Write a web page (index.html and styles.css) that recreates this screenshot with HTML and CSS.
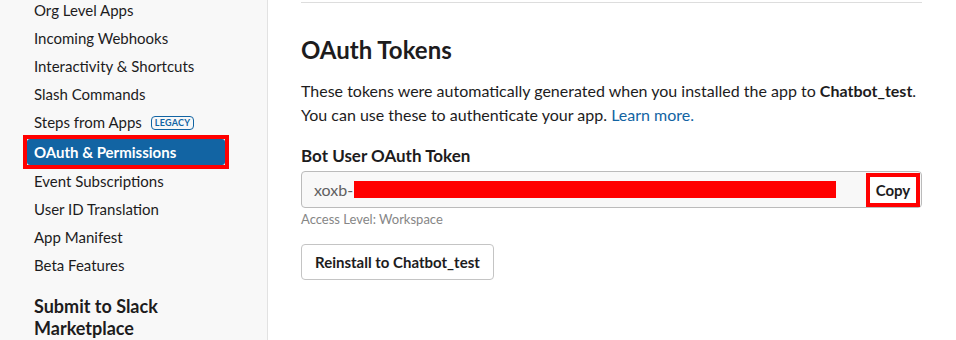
FILE: index.html
```html
<!DOCTYPE html>
<html lang="en">
<head>
    <meta charset="UTF-8">
    <title>OAuth &amp; Permissions | Slack API</title>
    <link rel="stylesheet" href="styles.css">
</head>
<body>
    <div class="page">
        <nav class="sidebar">
            <ul class="nav-list">
                <li class="nav-item">Org Level Apps</li>
                <li class="nav-item">Incoming Webhooks</li>
                <li class="nav-item">Interactivity &amp; Shortcuts</li>
                <li class="nav-item">Slash Commands</li>
                <li class="nav-item">Steps from Apps <span class="badge">Legacy</span></li>
                <li class="nav-item active">OAuth &amp; Permissions</li>
                <li class="nav-item">Event Subscriptions</li>
                <li class="nav-item">User ID Translation</li>
                <li class="nav-item">App Manifest</li>
                <li class="nav-item">Beta Features</li>
            </ul>
            <h3 class="nav-heading">Submit to Slack Marketplace</h3>
        </nav>

        <main class="content">
            <div class="divider"></div>
            <h2 class="section-title">OAuth Tokens</h2>
            <p class="section-text">
                These tokens were automatically generated when you installed the app to <strong>Chatbot_test</strong>.
                You can use these to authenticate your app. <a href="#" class="link">Learn more.</a>
            </p>

            <label class="field-label">Bot User OAuth Token</label>
            <div class="token-field">
                <span class="token-value">xoxb-<span class="redacted"></span></span>
                <button class="copy-btn highlight">Copy</button>
            </div>
            <div class="field-hint">Access Level: Workspace</div>

            <button class="btn">Reinstall to Chatbot_test</button>
        </main>
    </div>
</body>
</html>
```

FILE: styles.css
```css
body, html {
    margin: 0;
    padding: 0;
    height: 100%;
    overflow: hidden;
    font-family: 'Lato', 'Noto Sans', sans-serif;
    color: #1d1c1d;
    background-color: #fff;
}

.page {
    display: flex;
    height: 100%;
}

/* Sidebar */
.sidebar {
    width: 268px;
    flex-shrink: 0;
    box-sizing: border-box;
    background-color: #f8f8f8;
    border-right: 1px solid #e2e2e2;
    padding-left: 27px;
}

.nav-list {
    list-style: none;
    margin: -4px 0 0;
    padding: 0;
    width: 198px;
}

.nav-item {
    font-size: 15px;
    line-height: 28px;
    padding-left: 7px;
    white-space: nowrap;
}

.nav-item.active {
    position: relative;
    margin: 3px 0 2px;
    line-height: 26px;
    background-color: #1264a3;
    color: #fff;
    font-weight: 700;
    border-radius: 3px;
}

/* red annotation frame drawn over the screenshot */
.nav-item.active::after,
.highlight::after {
    content: "";
    position: absolute;
    top: -4px;
    left: -4px;
    right: -4px;
    bottom: -4px;
    border: 4px solid #ff0000;
}

.badge {
    display: inline-block;
    margin-left: 5px;
    padding: 0 3px;
    border: 1px solid #1264a3;
    border-radius: 4px;
    color: #1264a3;
    font-size: 9px;
    font-weight: 700;
    line-height: 12px;
    text-transform: uppercase;
    vertical-align: 2px;
    letter-spacing: 0.3px;
}

.nav-heading {
    width: 180px;
    margin: 16px 0 0 7px;
    font-size: 18px;
    line-height: 22px;
    font-weight: 700;
}

/* Main content */
.content {
    padding-left: 33px;
    width: 621px;
}

.divider {
    height: 2px;
    border-bottom: 1px solid #dddddd;
}

.section-title {
    margin: 32px 0 0;
    font-size: 24px;
    line-height: 30px;
    font-weight: 700;
}

.section-text {
    margin: 14px 0 0;
    font-size: 16px;
    line-height: 24px;
}

.link {
    color: #1264a3;
    text-decoration: none;
}

.field-label {
    display: block;
    margin-top: 18px;
    font-size: 17px;
    line-height: 22px;
    font-weight: 700;
}

.token-field {
    display: flex;
    align-items: center;
    justify-content: space-between;
    margin-top: 4px;
    height: 37px;
    box-sizing: border-box;
    border: 1px solid #bbbbbb;
    border-radius: 4px;
    background-color: #f8f8f8;
    padding: 0 5px 0 12px;
}

.token-value {
    display: flex;
    align-items: center;
    color: #616061;
    font-size: 16px;
}

.redacted {
    display: inline-block;
    width: 482px;
    height: 17px;
    margin-left: 1px;
    background-color: #ff0000;
}

.copy-btn {
    position: relative;
    height: 26px;
    width: 46px;
    padding: 0;
    border: none;
    border-radius: 2px;
    background-color: #fff;
    color: #1d1c1d;
    font-family: inherit;
    font-size: 15px;
    font-weight: 700;
}

.field-hint {
    margin-top: 2px;
    font-size: 13px;
    line-height: 18px;
    color: #868686;
}

.btn {
    margin-top: 16px;
    height: 36px;
    padding: 0 13px;
    border: 1px solid #c4c4c4;
    border-radius: 4px;
    background-color: #fff;
    color: #1d1c1d;
    font-family: inherit;
    font-size: 15px;
    font-weight: 700;
}
```
